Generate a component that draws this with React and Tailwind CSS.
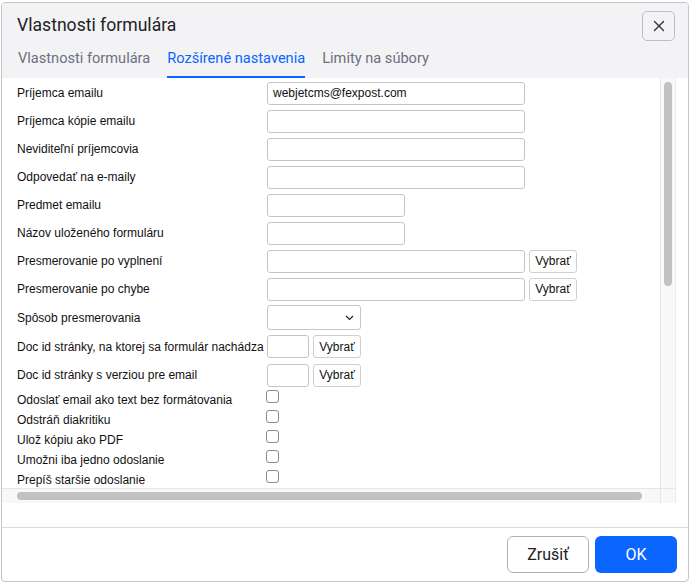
import React from "react";

const TextRow = ({ label, width = "w-[258px]", value = "", pick, h = "h-[28px]" }) => (
  <div className={`flex items-center ${h}`}>
    <div className="w-[250px] shrink-0">{label}</div>
    <div className="flex items-center gap-[4px]">
      <div className={`${width} h-[23px] border border-[#c6c6c6] rounded-[3px] bg-white px-[5px] flex items-center text-[12px] text-[#111]`}>
        {value}
      </div>
      {pick && <PickButton />}
    </div>
  </div>
);

const PickButton = () => (
  <div className="w-[48px] h-[23px] border border-[#cfcfcf] rounded-[3px] bg-white flex items-center justify-center text-[12px] text-[#111]">
    Vybrať
  </div>
);

const CheckRow = ({ label }) => (
  <div className="flex items-start h-[20px]">
    <div className="w-[249px] shrink-0 leading-[20px] pt-[1px]">{label}</div>
    <div className="mt-[1px] w-[13px] h-[13px] border border-[#8a8a8a] rounded-[3px] bg-white" />
  </div>
);

export default function App() {
  return (
    <div className="w-[690px] h-[584px] bg-white pt-[2px] pl-[1px]" style={{ fontFamily: "Roboto, sans-serif" }}>
      <div className="w-[688px] h-[580px] border border-[#c4c4c4] rounded-[4px] flex flex-col overflow-hidden bg-white">

        {/* Header */}
        <div className="h-[75px] bg-[#f3f3f6] flex flex-col shrink-0">
          <div className="h-[45px] flex items-center justify-between pl-[15px] pr-[13px]">
            <h1 className="text-[17.6px] text-[#222] leading-none pt-[1px]">Vlastnosti formulára</h1>
            <button className="w-[33px] h-[30px] border border-[#b9bfd0] rounded-[5px] flex items-center justify-center text-[#333]">
              <svg width="12" height="12" viewBox="0 0 12 12" fill="none" stroke="currentColor" strokeWidth="1.4" strokeLinecap="round">
                <path d="M1.5 1.5l9 9M10.5 1.5l-9 9" />
              </svg>
            </button>
          </div>
          <div className="h-[30px] flex items-end gap-[17px] pl-[16px] text-[14.6px]">
            <div className="leading-[20px] pb-[8px] border-b-2 border-transparent text-[#6c7080]">Vlastnosti formulára</div>
            <div className="leading-[20px] pb-[8px] border-b-2 border-[#0a66ff] text-[#0a66ff]">Rozšírené nastavenia</div>
            <div className="leading-[20px] pb-[8px] border-b-2 border-transparent text-[#6c7080]">Limity na súbory</div>
          </div>
        </div>

        {/* Content */}
        <div className="flex-1 border-b border-[#dcdcdc]">
          <div className="w-[674px] h-[425px] flex flex-col border-r border-[#ececec]">
            <div className="flex h-[410px]">
              <div
                className="flex-1 overflow-hidden pl-[15px] pt-[1px] text-[12px] text-[#111]"
                style={{ fontFamily: '"Liberation Sans", Arial, sans-serif' }}
              >
                <TextRow label="Príjemca emailu" value="webjetcms@fexpost.com" />
                <TextRow label="Príjemca kópie emailu" />
                <TextRow label="Neviditeľní príjemcovia" />
                <TextRow label="Odpovedať na e-maily" />
                <TextRow label="Predmet emailu" width="w-[138px]" />
                <TextRow label="Názov uloženého formuláru" width="w-[138px]" />
                <TextRow label="Presmerovanie po vyplnení" pick />
                <TextRow label="Presmerovanie po chybe" pick />
                <div className="flex items-center h-[29px]">
                  <div className="w-[250px] shrink-0">Spôsob presmerovania</div>
                  <div className="w-[94px] h-[25px] border border-[#c6c6c6] rounded-[3px] bg-white flex items-center justify-end pr-[6px]">
                    <svg width="9" height="6" viewBox="0 0 9 6" fill="none" stroke="#222" strokeWidth="1.2">
                      <path d="M1 1l3.5 3.5L8 1" />
                    </svg>
                  </div>
                </div>
                <TextRow label="Doc id stránky, na ktorej sa formulár nachádza" width="w-[42px]" pick h="h-[29px]" />
                <TextRow label="Doc id stránky s verziou pre email" width="w-[42px]" pick />
                <CheckRow label="Odoslať email ako text bez formátovania" />
                <CheckRow label="Odstráň diakritiku" />
                <CheckRow label="Ulož kópiu ako PDF" />
                <CheckRow label="Umožni iba jedno odoslanie" />
                <CheckRow label="Prepíš staršie odoslanie" />
              </div>
              <div className="w-[15px] shrink-0 bg-[#f8f8f8] border-l border-[#e6e6e6] pt-[4px] flex justify-center">
                <div className="w-[8px] h-[204px] rounded-full bg-[#c1c1c1]" />
              </div>
            </div>
            <div className="flex h-[15px]">
              <div className="flex-1 bg-[#f8f8f8] border-t border-[#e6e6e6] pl-[15px] pr-[18px] pt-[3px]">
                <div className="h-[8px] rounded-full bg-[#c1c1c1]" />
              </div>
              <div className="w-[15px] shrink-0 bg-[#f8f8f8] border-t border-l border-[#e6e6e6]" />
            </div>
          </div>
        </div>

        {/* Footer */}
        <div className="h-[53px] shrink-0 flex items-center justify-end gap-[6px] pr-[11px]">
          <button className="w-[82px] h-[37px] border border-[#a9b0c2] rounded-[6px] bg-white text-[16px] text-[#222]">Zrušiť</button>
          <button className="w-[82px] h-[37px] rounded-[6px] bg-[#0a66ff] text-[16px] text-white">OK</button>
        </div>
      </div>
    </div>
  );
}
